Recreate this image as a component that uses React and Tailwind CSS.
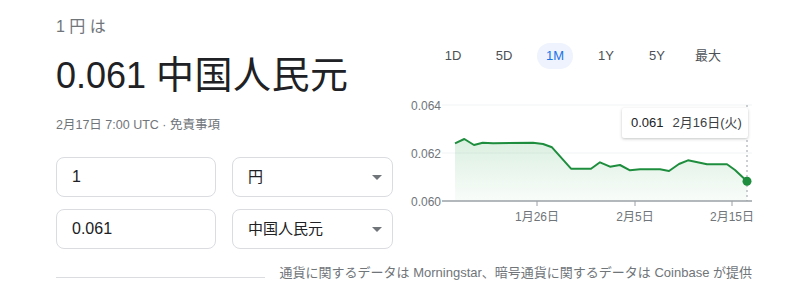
const pts = [
  [455, 143.3], [464.3, 139], [474, 145], [482.7, 142.7], [493, 143.3], [533, 142.7],
  [543, 144], [552, 147.3], [571, 168.7], [591, 168.7], [600, 162.3], [610, 166.7],
  [620, 165], [630, 170.3], [640, 169.3], [660, 169.3], [669, 171], [679, 164],
  [688, 160.3], [707, 164.3], [727, 164.3], [735, 170], [747, 181.3],
];

const ranges = ["1D", "5D", "1M", "1Y", "5Y", "最大"];

function Caret() {
  return (
    <svg width="10" height="5" viewBox="0 0 10 5" className="shrink-0">
      <path d="M0 0h10L5 5z" fill="#70757a" />
    </svg>
  );
}

function Chart() {
  const line = pts.map((p, i) => `${i ? "L" : "M"}${p[0]} ${p[1]}`).join(" ");
  const area = `${line} L747 201 L455 201 Z`;
  return (
    <div className="relative w-[360px] h-[135px]">
      <svg width="360" height="135" viewBox="400 90 360 135" className="block">
        <defs>
          <linearGradient id="g" x1="0" y1="0" x2="0" y2="1">
            <stop offset="0" stopColor="#34a853" stopOpacity="0.18" />
            <stop offset="1" stopColor="#34a853" stopOpacity="0.03" />
          </linearGradient>
        </defs>
        <line x1="442" y1="105" x2="752" y2="105" stroke="#f1f3f4" strokeWidth="1" />
        <line x1="442" y1="153" x2="752" y2="153" stroke="#f1f3f4" strokeWidth="1" />
        <path d={area} fill="url(#g)" />
        <line x1="747" y1="105" x2="747" y2="201" stroke="#9aa0a6" strokeWidth="1" strokeDasharray="2 3" />
        <path d={line} fill="none" stroke="#1e8e3e" strokeWidth="2" strokeLinejoin="round" />
        <line x1="442" y1="201" x2="752" y2="201" stroke="#9aa0a6" strokeWidth="1.5" />
        {[537, 635, 732].map((x) => (
          <line key={x} x1={x} y1="201" x2={x} y2="206" stroke="#9aa0a6" strokeWidth="1" />
        ))}
        <circle cx="747" cy="181.3" r="4.5" fill="#1e8e3e" />
        <g fontFamily="'Liberation Sans', 'Noto Sans CJK JP', sans-serif" fontSize="12" fill="#70757a">
          <text x="441" y="110" textAnchor="end">0.064</text>
          <text x="441" y="158" textAnchor="end">0.062</text>
          <text x="441" y="206" textAnchor="end">0.060</text>
          <text x="537" y="221" textAnchor="middle">1月26日</text>
          <text x="635" y="221" textAnchor="middle">2月5日</text>
          <text x="732" y="221" textAnchor="middle">2月15日</text>
        </g>
      </svg>
      <div className="absolute left-[222px] top-[18px] w-[126px] h-[30px] bg-white rounded-[2px] shadow-[0_1px_3px_rgba(60,64,67,0.3)] flex items-center pl-[9px] gap-[9px] text-[13px]">
        <span className="text-[#202124]">0.061</span>
        <span className="text-[#3c4043]">2月16日(火)</span>
      </div>
    </div>
  );
}

export default function App() {
  return (
    <div className="w-[800px] h-[295px] bg-white pl-[56px] pr-[48px] font-['Liberation_Sans','Noto_Sans_CJK_JP',sans-serif] text-[#202124]">
      <div className="flex">
        <div className="w-[337px] shrink-0 pt-[15px]">
          <div className="text-[16px] leading-[24px] text-[#70757a]">1 円 は</div>
          <div className="mt-[14px] text-[36px] leading-[44px] text-[#202124] whitespace-nowrap">
            0.061 <span className="text-[38px] tracking-[0.5px]">中国人民元</span>
          </div>
          <div className="mt-[19px] text-[12.5px] leading-[16px] text-[#70757a]">2月17日 7:00 UTC · 免責事項</div>
          <div className="mt-[24px] flex flex-col gap-[12px]">
            <div className="flex gap-[16px]">
              <div className="w-[160px] h-[40px] border border-[#dadce0] rounded-[8px] flex items-center px-[15px] text-[16px]">1</div>
              <div className="flex-1 h-[40px] border border-[#dadce0] rounded-[8px] flex items-center justify-between pl-[15px] pr-[10px] text-[15px]">
                <span>円</span>
                <Caret />
              </div>
            </div>
            <div className="flex gap-[16px]">
              <div className="w-[160px] h-[40px] border border-[#dadce0] rounded-[8px] flex items-center px-[15px] text-[16px]">0.061</div>
              <div className="flex-1 h-[40px] border border-[#dadce0] rounded-[8px] flex items-center justify-between pl-[15px] pr-[10px] text-[15px]">
                <span>中国人民元</span>
                <Caret />
              </div>
            </div>
          </div>
        </div>
        <div className="ml-[7px] shrink-0 w-[360px]">
          <div className="mt-[43px] ml-[35px] flex gap-[15px]">
            {ranges.map((r) => (
              <div
                key={r}
                className={
                  r === "1M"
                    ? "w-[36px] h-[26px] rounded-full bg-[#eef3fd] text-[#1a73e8] flex items-center justify-center text-[13px]"
                    : "w-[36px] h-[26px] rounded-full text-[#4d5156] flex items-center justify-center text-[13px]"
                }
              >
                {r}
              </div>
            ))}
          </div>
          <div className="mt-[21px]">
            <Chart />
          </div>
        </div>
      </div>
      <div className="mt-[15px] flex items-center gap-[15px]">
        <div className="flex-1 h-px bg-[#dadce0] mt-[8px]" />
        <div className="text-[13px] leading-[18px] text-[#70757a] whitespace-nowrap">
          通貨に関するデータは Morningstar、暗号通貨に関するデータは Coinbase が提供
        </div>
      </div>
    </div>
  );
}
